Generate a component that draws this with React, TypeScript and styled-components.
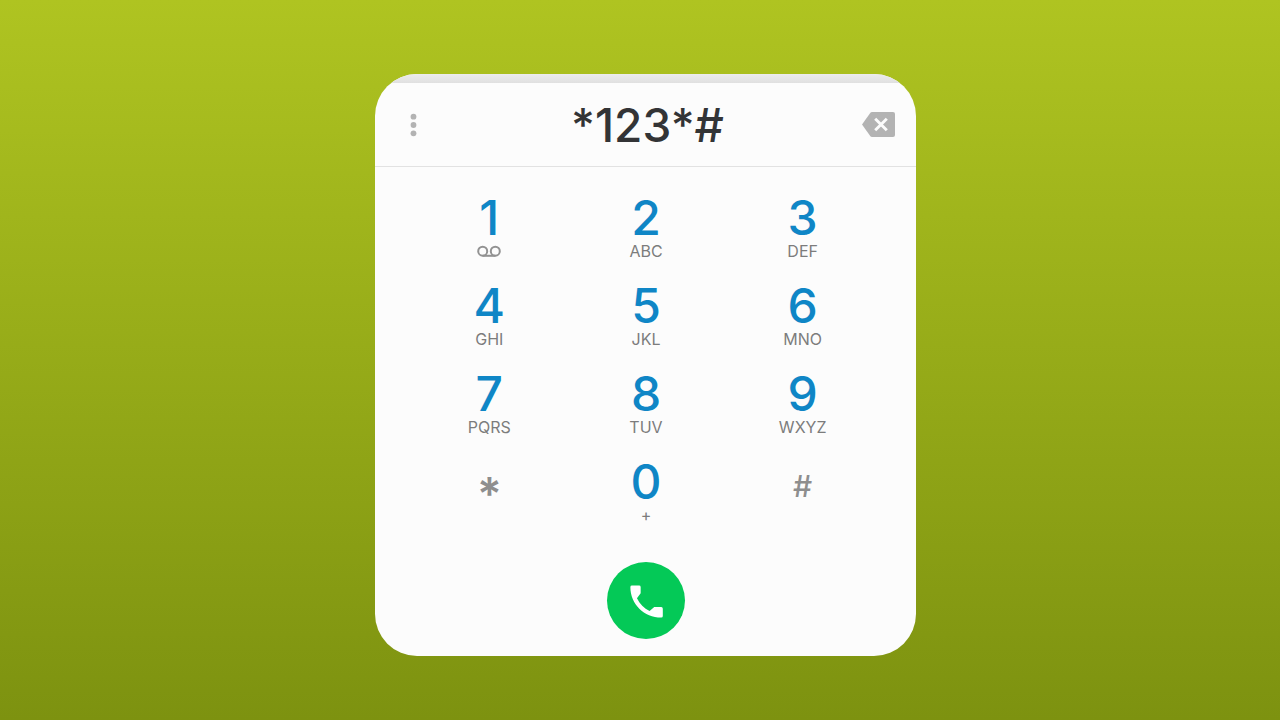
import React, { useState } from 'react';
import styled, { createGlobalStyle } from 'styled-components';

const GlobalStyle = createGlobalStyle`
  *, *::before, *::after { box-sizing: border-box; }
  body { margin: 0; font-family: Inter, "Liberation Sans", sans-serif; }
  button { margin: 0; padding: 0; border: 0; background: none; font: inherit; cursor: pointer; }
`;

const Page = styled.main`
  display: flex;
  justify-content: center;
  align-items: center;
  min-height: 100vh;
  padding: 74px 0 64px 11px;
  background: linear-gradient(#afc421, #7d9210);
`;

const Dialer = styled.section`
  width: 100%;
  max-width: 541px;
  overflow: hidden;
  border-radius: 42px;
  background: #fcfcfc;
`;

const TopShade = styled.div`
  height: 9px;
  background: linear-gradient(#ececec, #e0e0e0);
`;

const Header = styled.header`
  display: flex;
  align-items: center;
  height: 84px;
  padding: 0 21px 0 14px;
  border-bottom: 1px solid #e2e2e2;
`;

const MenuButton = styled.button`
  display: grid;
  place-items: center;
  flex: none;
  width: 49px;
  height: 48px;
`;

const BackspaceButton = styled.button`
  display: flex;
  align-items: center;
  justify-content: flex-end;
  flex: none;
  width: 38px;
  height: 48px;
`;

const NumberField = styled.input`
  flex: 1;
  min-width: 0;
  height: 60px;
  padding: 0;
  border: 0;
  outline: 0;
  background: transparent;
  color: #333436;
  font: 500 46px/60px Inter, "Liberation Sans", sans-serif;
  text-align: center;
`;

const Keypad = styled.div`
  display: grid;
  grid-template-columns: repeat(3, 1fr);
  grid-auto-rows: 88px;
  padding: 24px 35px 0 36px;
`;

const Key = styled.button`
  display: flex;
  flex-direction: column;
  align-items: center;
`;

const Digit = styled.span`
  height: 52px;
  color: #0f86c6;
  font-size: 48px;
  font-weight: 500;
  line-height: 54px;
`;

const Letters = styled.span`
  display: flex;
  align-items: center;
  height: 16px;
  color: #7c7c7c;
  font-size: 16px;
  line-height: 16px;
`;

const Sign = styled.span<{ $large?: boolean }>`
  padding-top: ${({ $large }) => ($large ? 9 : 1)}px;
  color: #8e8e8e;
  font-size: ${({ $large }) => ($large ? 46 : 30)}px;
  font-weight: ${({ $large }) => ($large ? 600 : 500)};
  line-height: 60px;
`;

const Footer = styled.footer`
  display: flex;
  justify-content: center;
  padding: 19px 0 17px;
`;

const CallButton = styled.button`
  display: grid;
  place-items: center;
  width: 78px;
  height: 77px;
  border-radius: 50%;
  background: #04c957;
  color: #fff;
`;

const VoicemailIcon = () => (
  <svg width="24" height="12" viewBox="0 0 24 12" fill="none" stroke="#929292" strokeWidth="2" role="img" aria-label="Voicemail">
    <circle cx="5.7" cy="6.2" r="4.5" />
    <circle cx="18.3" cy="6.2" r="4.5" />
    <path d="M5.7 10.8H18.3" />
  </svg>
);

const keys: { value: string; letters?: React.ReactNode }[] = [
  { value: '1', letters: <VoicemailIcon /> },
  { value: '2', letters: 'ABC' },
  { value: '3', letters: 'DEF' },
  { value: '4', letters: 'GHI' },
  { value: '5', letters: 'JKL' },
  { value: '6', letters: 'MNO' },
  { value: '7', letters: 'PQRS' },
  { value: '8', letters: 'TUV' },
  { value: '9', letters: 'WXYZ' },
  { value: '*' },
  { value: '0', letters: '+' },
  { value: '#' },
];

export default function App() {
  const [number, setNumber] = useState('*123*#');

  return (
    <>
      <GlobalStyle />
      <Page>
        <Dialer aria-label="Dialer">
          <TopShade />
          <Header>
            <MenuButton type="button" aria-label="More options">
              <svg width="7" height="24" viewBox="0 0 7 24" fill="#b3b3b3" aria-hidden="true">
                <circle cx="3.5" cy="3.7" r="2.9" />
                <circle cx="3.5" cy="12" r="2.9" />
                <circle cx="3.5" cy="20.3" r="2.9" />
              </svg>
            </MenuButton>
            <NumberField
              type="tel"
              aria-label="Phone number"
              value={number}
              onChange={(e) => setNumber(e.target.value)}
            />
            <BackspaceButton
              type="button"
              aria-label="Delete digit"
              onClick={() => setNumber(number.slice(0, -1))}
            >
              <svg width="33" height="25" viewBox="0 0 33 25" aria-hidden="true">
                <path
                  d="M10 0H31a2 2 0 0 1 2 2v21a2 2 0 0 1-2 2H10a2 2 0 0 1-1.6-.8L0 12.5 8.4.8A2 2 0 0 1 10 0Z"
                  fill="#b3b3b3"
                />
                <path d="m13.2 6.7 11.6 11.6m0-11.6-11.6 11.6" stroke="#fcfcfc" strokeWidth="2.9" />
              </svg>
            </BackspaceButton>
          </Header>
          <Keypad>
            {keys.map(({ value, letters }) => (
              <Key key={value} type="button" onClick={() => setNumber(number + value)}>
                {letters ? (
                  <>
                    <Digit>{value}</Digit>
                    <Letters>{letters}</Letters>
                  </>
                ) : (
                  <Sign $large={value === '*'}>{value}</Sign>
                )}
              </Key>
            ))}
          </Keypad>
          <Footer>
            <CallButton type="button" aria-label="Call">
              <svg width="34" height="34" viewBox="-1 -1 35 35" fill="currentColor" aria-hidden="true">
                <path d="M2 0.5H9.4A1.6 1.6 0 0 1 11 2V8.6L7.2 13.6C10 19.4 14.5 24 20.2 26.9L25 22.8H32.2A1.6 1.6 0 0 1 33.8 24.4V31.9A1.6 1.6 0 0 1 32.2 33.5C14.5 33.5 0.4 19.8 0.4 2A1.6 1.6 0 0 1 2 0.5Z" />
              </svg>
            </CallButton>
          </Footer>
        </Dialer>
      </Page>
    </>
  );
}
